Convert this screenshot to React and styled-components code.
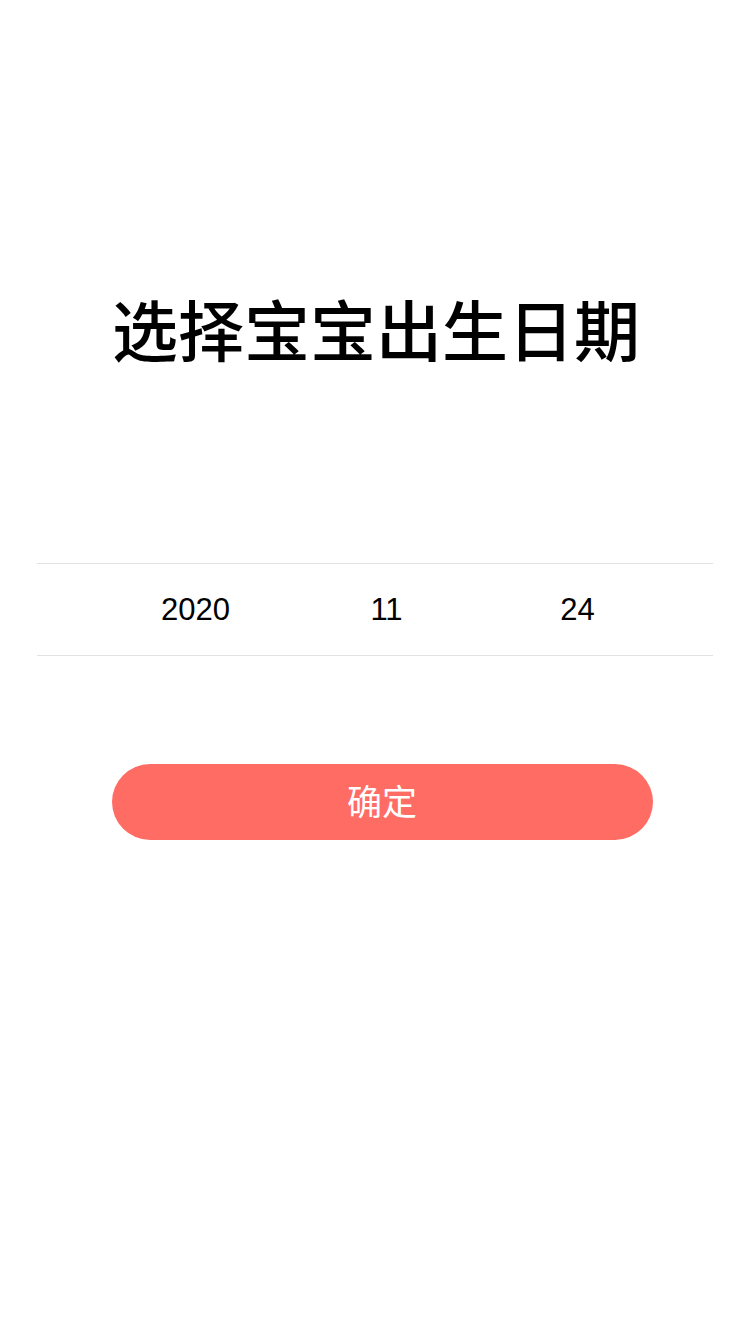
import React from "react";
import styled, { createGlobalStyle } from "styled-components";

const Global = createGlobalStyle`
  html, body { margin: 0; padding: 0; background: #fff; }
  body { font-family: "Liberation Sans", "Noto Sans CJK SC", sans-serif; }
`;

const Page = styled.div`
  width: 750px;
  min-height: 1334px;
  display: flex;
  flex-direction: column;
  align-items: center;
  background: #fff;
`;

const Title = styled.h1`
  margin: 288px 0 0 2px;
  font-family: "Noto Sans CJK SC", sans-serif;
  font-weight: 500;
  font-size: 66px;
  line-height: 78px;
  color: #000;
  letter-spacing: 0;
`;

const Picker = styled.div`
  margin-top: 197px;
  height: 91px;
  border-top: 1px solid #e2e2e2;
  border-bottom: 1px solid #e2e2e2;
  display: grid;
  grid-template-columns: repeat(3, 1fr);
  align-items: center;
  padding: 0 40px 0 63px;
  box-sizing: content-box;
  width: 573px;
`;

const Cell = styled.div`
  text-align: center;
  font-family: "Liberation Sans", Arial, sans-serif;
  font-size: 31px;
  color: #000;
`;

const Confirm = styled.button`
  margin-top: 108px;
  margin-left: 14px;
  width: 541px;
  height: 76px;
  border: none;
  border-radius: 38px;
  background: #ff6c64;
  color: #fff;
  font-family: "Noto Sans CJK SC", sans-serif;
  font-size: 35px;
  padding: 0 0 5px;
  cursor: pointer;
`;

export default function App() {
  return (
    <>
      <Global />
      <Page>
        <Title>选择宝宝出生日期</Title>
        <Picker>
          <Cell>2020</Cell>
          <Cell>11</Cell>
          <Cell>24</Cell>
        </Picker>
        <Confirm>确定</Confirm>
      </Page>
    </>
  );
}
